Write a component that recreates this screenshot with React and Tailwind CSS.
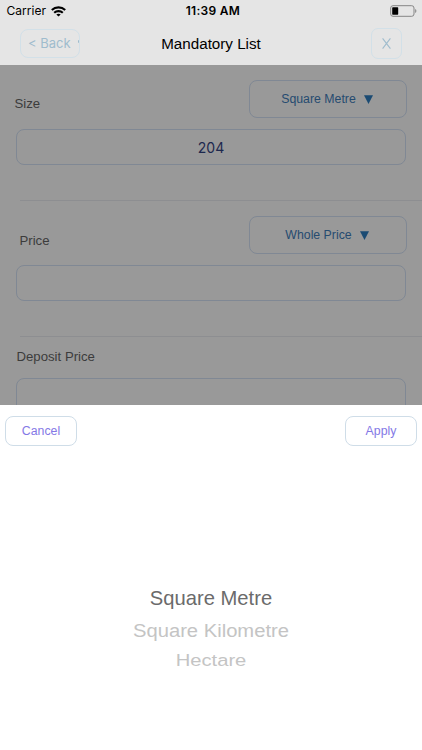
const arial = "font-['Liberation_Sans',Arial,sans-serif]";
const inter = "font-['Inter',sans-serif]";

function StatusBar() {
  return (
    <div className={`grid h-[22px] grid-cols-3 items-center text-black ${inter}`}>
      <div className="flex items-center gap-[5px] pl-[6.5px] text-[12px] leading-none tracking-[0.05px]">
        <span>Carrier</span>
        <svg width="15" height="11" viewBox="0 0 15 11" fill="none" stroke="currentColor" strokeWidth="2.1">
          <path d="M.8 4.1C4.6.5 10.4.5 14.2 4.1" />
          <path d="M3.2 6.8c2.4-2.3 6.2-2.3 8.6 0" />
          <path d="M7.5 10.6 5.3 8.5c1.2-1.1 3.2-1.1 4.4 0Z" fill="currentColor" stroke="none" />
        </svg>
      </div>
      <div className="pl-[4px] text-center text-[12px] font-semibold leading-none whitespace-nowrap tracking-[0.3px]">11:39 AM</div>
      <div className="flex justify-end pr-[5px]">
        <svg width="27" height="12" viewBox="0 0 27 12">
          <rect x=".7" y=".7" width="23.3" height="10.6" rx="2.3" fill="none" stroke="#858585" strokeWidth="1" />
          <rect x="2.2" y="2.3" width="6" height="7.4" rx=".6" fill="#000" />
          <path d="M25.2 4v4c1.6-.6 1.6-3.4 0-4Z" fill="#858585" />
        </svg>
      </div>
    </div>
  );
}

function Dropdown({ children }) {
  return (
    <button className="flex h-[38px] w-[158px] items-center justify-center gap-[8px] rounded-[8px] border border-[#808894] pt-[1px] pr-[2px] text-[12.3px] text-[#264b70]">
      <span>{children}</span>
      <svg width="9" height="9" viewBox="0 0 9 9">
        <path d="M0 .3h9L4.5 9Z" fill="#1b4b73" />
      </svg>
    </button>
  );
}

function Field({ children }) {
  return (
    <div className={`ml-[16px] flex h-[36px] w-[390px] shrink-0 items-center justify-center rounded-[8px] border border-[#808894] pt-[1px] text-[14px] tracking-[0.1px] text-[#1c284e] ${inter}`}>
      {children}
    </div>
  );
}

export default function App() {
  return (
    <div className={`flex h-[750px] w-[422px] flex-col overflow-hidden bg-white ${arial}`}>
      <header className="h-[65px] shrink-0 bg-[#e5e5e5]">
        <StatusBar />
        <div className="flex h-[43px] items-center justify-between pr-[20px] pl-[20px]">
          <button className={`flex h-[29px] w-[60px] items-center overflow-hidden rounded-[8px] border border-[#d2e0e8] pl-[7px] text-[13px] whitespace-nowrap text-[#9fbccd] ${inter}`}>
            &lt; Back
            <span className="mb-[5px] ml-[7px] h-[3px] w-[2px] shrink-0 rounded-full bg-[#9fbccd]" />
          </button>
          <h1 className="pt-[2px] pr-[29px] text-[15.2px] text-black">Mandatory List</h1>
          <button className="flex h-[31px] w-[31px] items-center justify-center rounded-[7px] border border-[#d2e0e8]">
            <svg width="9" height="11" viewBox="0 0 9 11" stroke="#9fbccd" strokeWidth="1.1">
              <path d="M.6.4 8.4 10.6M8.4.4.6 10.6" />
            </svg>
          </button>
        </div>
      </header>

      <main className="flex h-[340px] shrink-0 flex-col overflow-hidden bg-[#999999] text-[13.2px] text-[#3c3c3c]">
        <section className="flex h-[135px] shrink-0 flex-col pt-[15px]">
          <div className="flex items-center justify-between pr-[15px] pl-[14.5px]">
            <span className="pt-[9px]">Size</span>
            <Dropdown>Square Metre</Dropdown>
          </div>
          <div className="mt-[11px]">
            <Field>204</Field>
          </div>
        </section>
        <div className="ml-[20px] h-px shrink-0 bg-[#8d8e91]" />
        <section className="flex h-[135px] shrink-0 flex-col pt-[15px]">
          <div className="flex items-center justify-between pr-[15px] pl-[19.5px]">
            <span className="pt-[12px]">Price</span>
            <Dropdown>Whole Price</Dropdown>
          </div>
          <div className="mt-[11px]">
            <Field />
          </div>
        </section>
        <div className="ml-[20px] h-px shrink-0 bg-[#8d8e91]" />
        <section className="flex shrink-0 flex-col pt-[10px]">
          <span className="pl-[16.5px] leading-[20px]">Deposit Price</span>
          <div className="mt-[11px]">
            <Field />
          </div>
        </section>
      </main>

      <div className="flex grow flex-col bg-white">
        <div className="flex justify-between px-[5px] pt-[11px] text-[12.3px] text-[#8479e6]">
          <button className="h-[30px] w-[72px] rounded-[8px] border border-[#cfdde8]">Cancel</button>
          <button className="h-[30px] w-[72px] rounded-[8px] border border-[#cfdde8]">Apply</button>
        </div>
        <ul className="mt-[135px] flex flex-col items-center text-[20.2px] text-[#c4c4c4]">
          <li className="flex h-[34px] items-center text-[#6b6b6b]">Square Metre</li>
          <li className="flex h-[31px] scale-y-[0.94] items-center">Square Kilometre</li>
          <li className="flex h-[29px] scale-y-[0.8] items-center">Hectare</li>
        </ul>
      </div>
    </div>
  );
}
